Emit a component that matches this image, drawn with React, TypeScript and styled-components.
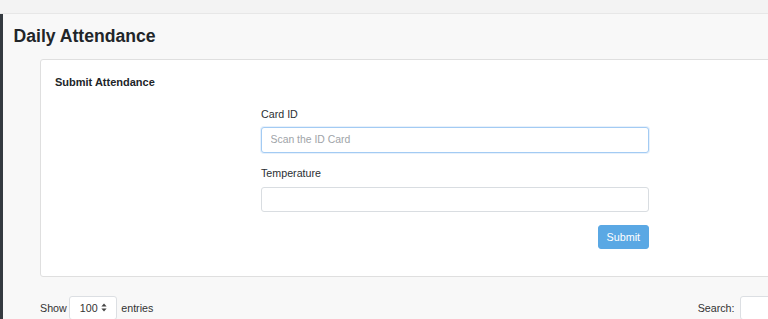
import React from "react";
import styled, { createGlobalStyle } from "styled-components";

const Global = createGlobalStyle`
  html, body { margin: 0; padding: 0; }
  body {
    width: 768px;
    height: 319px;
    overflow: hidden;
    background: #f8f8f8;
    font-family: "Liberation Sans", Arial, sans-serif;
    color: #212529;
  }
  * { box-sizing: border-box; }
`;

const TopBar = styled.div`
  height: 14px;
  background: #f3f3f3;
  border-bottom: 1px solid #e7e7e7;
`;

const Shell = styled.div`
  display: flex;
  height: 305px;
`;

const SideEdge = styled.div`
  width: 3px;
  flex: none;
  background: #343a40;
`;

const Main = styled.main`
  flex: 1;
  min-width: 0;
  background: #f8f8f8;
  overflow: hidden;
`;

const Header = styled.div`
  padding: 11.5px 0 0 10.5px;
`;

const Title = styled.h1`
  margin: 0;
  font-size: 17.6px;
  line-height: 21px;
  font-weight: 700;
  color: #212529;
`;

const Content = styled.div`
  width: 867px;
  padding: 12.5px 0 0 37px;
`;

const Card = styled.section`
  background: #fff;
  border: 1px solid #dfdfdf;
  border-radius: 3px;
  padding: 16px 14px 27px;
`;

const CardTitle = styled.h5`
  margin: 0;
  font-size: 11px;
  line-height: 13px;
  font-weight: 700;
  color: #212529;
`;

const Form = styled.form`
  width: 388px;
  margin: 16.5px 0 0 206px;
  display: flex;
  flex-direction: column;
`;

const Group = styled.div`
  margin-bottom: 12.5px;
  display: flex;
  flex-direction: column;
`;

const Label = styled.label`
  font-size: 10.7px;
  line-height: 16px;
  margin-bottom: 5.5px;
  color: #2b2f33;
`;

const Input = styled.input<{ $focused?: boolean }>`
  height: 25.5px;
  width: 100%;
  padding: 0 8.5px;
  font-family: "Liberation Sans", Arial, sans-serif;
  font-size: 10.4px;
  color: #495057;
  background: #fff;
  border: 1px solid ${(p) => (p.$focused ? "#a3cbf3" : "#d9dde1")};
  border-radius: 3px;
  outline: none;
  ${(p) => (p.$focused ? "box-shadow: 0 0 0 1px rgba(160,200,245,0.25);" : "")}
  &::placeholder { color: #a0a4a8; }
`;

const Actions = styled.div`
  display: flex;
  justify-content: flex-end;
`;

const Button = styled.button`
  height: 24.5px;
  width: 51.5px;
  padding: 0;
  font-family: "Liberation Sans", Arial, sans-serif;
  font-size: 10.8px;
  color: #fff;
  background: #5aa8e4;
  border: 1px solid #5aa8e4;
  border-radius: 3px;
`;

const Controls = styled.div`
  margin-top: 18.5px;
  display: flex;
  justify-content: space-between;
  align-items: center;
  font-size: 10.7px;
  color: #333;
`;

const Length = styled.div`
  display: flex;
  align-items: center;
`;

const Select = styled.div`
  margin: 0 4px 0 2.5px;
  width: 48px;
  height: 24px;
  display: flex;
  align-items: center;
  justify-content: space-between;
  padding: 0 9px 0 9.5px;
  background: #fff;
  border: 1px solid #dcdfe3;
  border-radius: 3px;
  font-size: 10.7px;
  color: #333;
`;

const SearchBox = styled.div`
  display: flex;
  align-items: center;
  gap: 5.5px;
`;

const SearchInput = styled.div`
  width: 130px;
  height: 24px;
  background: #fff;
  border: 1px solid #dcdfe3;
  border-radius: 3px;
`;

const Arrows = () => (
  <svg width="6" height="9" viewBox="0 0 6 9">
    <path d="M3 0.5 L5.6 3.6 H0.4 Z" fill="#444" />
    <path d="M3 8.5 L5.6 5.4 H0.4 Z" fill="#444" />
  </svg>
);

export default function App() {
  return (
    <>
      <Global />
      <TopBar />
      <Shell>
        <SideEdge />
        <Main>
          <Header>
            <Title>Daily Attendance</Title>
          </Header>
          <Content>
            <Card>
              <CardTitle>Submit Attendance</CardTitle>
              <Form onSubmit={(e) => e.preventDefault()}>
                <Group>
                  <Label>Card ID</Label>
                  <Input $focused placeholder="Scan the ID Card" />
                </Group>
                <Group>
                  <Label>Temperature</Label>
                  <Input />
                </Group>
                <Actions>
                  <Button type="submit">Submit</Button>
                </Actions>
              </Form>
            </Card>
            <Controls>
              <Length>
                Show
                <Select>
                  <span>100</span>
                  <Arrows />
                </Select>
                entries
              </Length>
              <SearchBox>
                Search:
                <SearchInput />
              </SearchBox>
            </Controls>
          </Content>
        </Main>
      </Shell>
    </>
  );
}
